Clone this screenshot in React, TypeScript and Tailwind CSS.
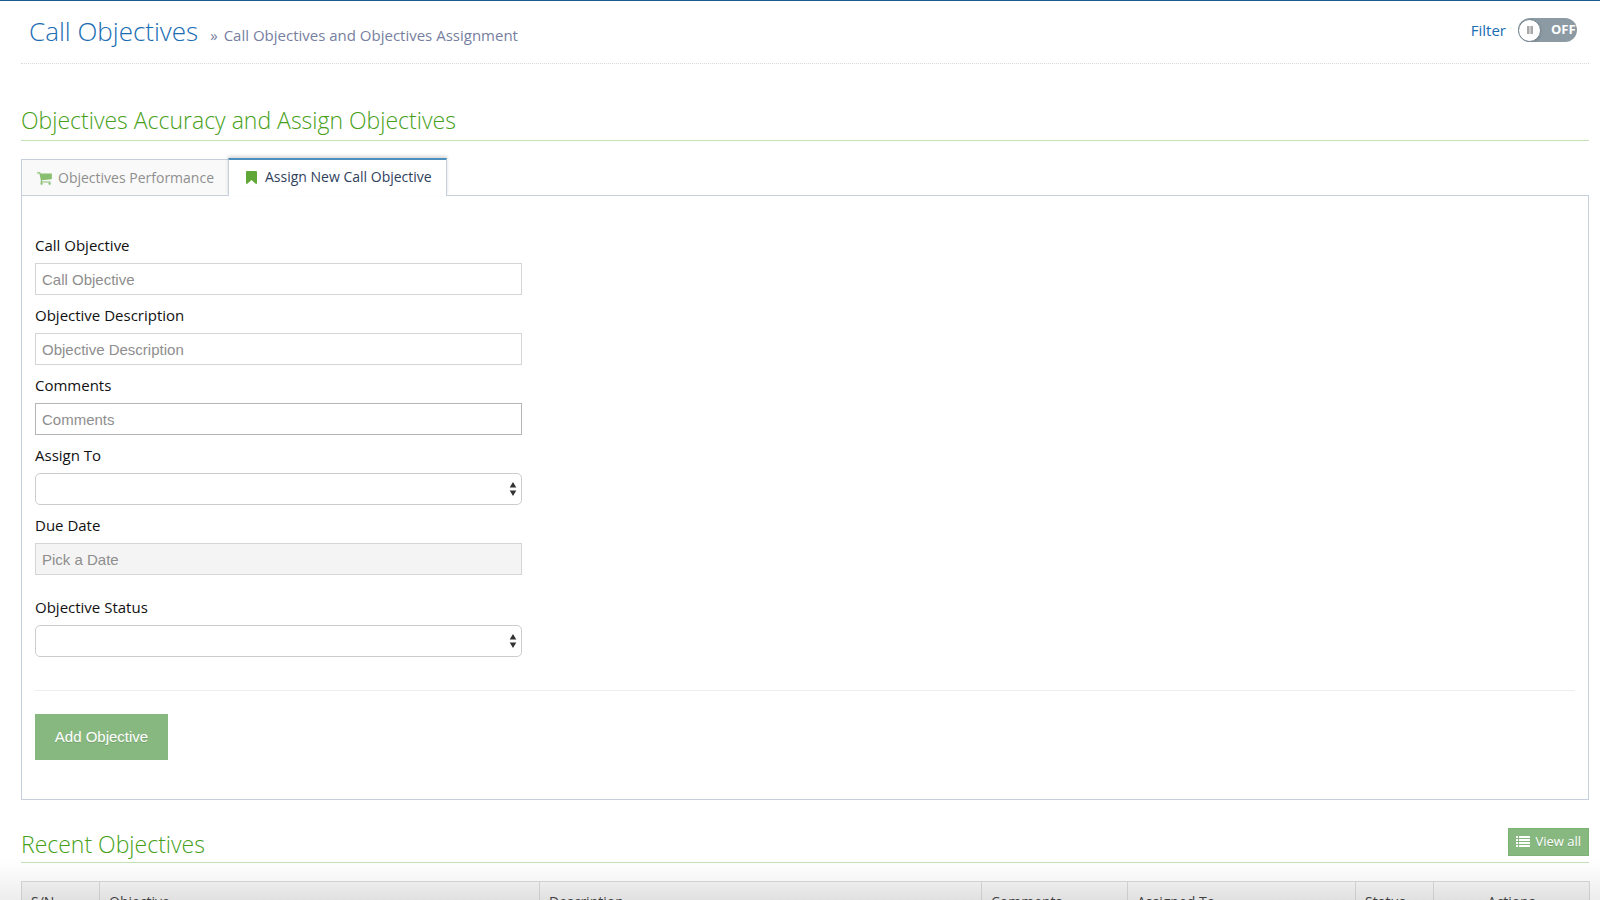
import { useState } from "react";
import type { ReactNode } from "react";

const columns = [
  { label: "S/N", className: "w-[78px] text-left" },
  { label: "Objective", className: "w-[440px] text-left" },
  { label: "Description", className: "w-[442px] text-left" },
  { label: "Comments", className: "w-[146px] text-left" },
  { label: "Assigned To", className: "w-[228px] text-left" },
  { label: "Status", className: "w-[78px] text-left" },
  { label: "Actions", className: "w-[156px] text-center" },
];

const inputClass =
  "block h-8 w-full border px-1.5 font-['Liberation_Sans',Arial,sans-serif] text-[15px] text-[#858585] placeholder:text-[#8e8e8e] outline-none";

function CartIcon() {
  return (
    <svg viewBox="0 0 1792 1792" className="size-4" fill="currentColor" aria-hidden="true">
      <path d="M640 1536q0 52-38 90t-90 38-90-38-38-90 38-90 90-38 90 38 38 90zm896 0q0 52-38 90t-90 38-90-38-38-90 38-90 90-38 90 38 38 90zm128-1088v512q0 24-16.5 42.5t-40.5 21.5l-1044 122q13 60 13 70 0 16-24 64h920q26 0 45 19t19 45-19 45-45 19h-1024q-26 0-45-19t-19-45q0-11 8-31.5t16-36 21.5-40 15.5-29.5l-177-823h-204q-26 0-45-19t-19-45 19-45 45-19h256q16 0 28.5 6.5t19.5 15.5 13 24.5 8 26 5.5 29.5 4.5 26h1201q26 0 45 19t19 45z" />
    </svg>
  );
}

function BookmarkIcon() {
  return (
    <svg viewBox="0 0 11 13" className="h-[13px] w-[11px]" fill="currentColor" aria-hidden="true">
      <path d="M1 0h9q1 0 1 1v11q0 1-1 1L5.500 9 1 13q-1 0-1-1V1q0-1 1-1z" />
    </svg>
  );
}

function ListIcon() {
  return (
    <svg viewBox="0 0 14 12" className="h-3 w-3.5" fill="currentColor" aria-hidden="true">
      <path d="M0 0h2v2H0zM3 0h11v2H3zM0 3h2v2H0zM3 3h11v2H3zM0 6h2v2H0zM3 6h11v2H3zM0 9h2v2H0zM3 9h11v2H3z" />
    </svg>
  );
}

function Field({ id, label, children }: { id: string; label: string; children: ReactNode }) {
  return (
    <div>
      <label htmlFor={id} className="mb-2 block text-[15px] leading-5 text-[#111]">
        {label}
      </label>
      {children}
    </div>
  );
}

function SelectBox({ id }: { id: string }) {
  return (
    <div className="relative">
      <select id={id} className="block h-8 w-full appearance-none rounded-[5px] border border-[#ccc] bg-white px-2 outline-none">
        <option value=""></option>
      </select>
      <svg
        viewBox="0 0 8 14"
        className="pointer-events-none absolute top-[9px] right-[5px] h-3.5 w-2"
        fill="#333"
        aria-hidden="true">
        <path d="M4 0l3.300 5.500H.7zM4 14L.7 8.500h6.600z" />
      </svg>
    </div>
  );
}

export default function App() {
  const [filter, setFilter] = useState(false);

  return (
    <div className="relative h-screen overflow-hidden border-t border-[#1f5a8c] bg-white font-['Open_Sans',sans-serif] text-[15px] text-[#393939]">
      <div className="pr-[11px] pl-[21px]">
        {/* Page header */}
        <header className="flex h-[63px] items-start justify-between border-b border-dotted border-[#d9d9d9] pr-3 pl-2">
          <h1 className="flex items-baseline gap-3 pt-3 text-[26px] leading-9 font-light text-[#1a6db3]">
            Call Objectives
            <small className="flex gap-1.5 text-[15px] font-normal text-[#7680a0]">
              <span>»</span>
              Call Objectives and Objectives Assignment
            </small>
          </h1>
          <label className="flex cursor-pointer items-center gap-3 pt-[17px] text-[#1a6db3]">
            Filter
            <input
              type="checkbox"
              role="switch"
              className="sr-only"
              checked={filter}
              onChange={(e) => setFilter(e.target.checked)}
            />
            <span className="flex h-6 w-[59px] items-center gap-2.5 overflow-hidden rounded-full bg-[#8b9aa3]">
              <span className="flex size-[23px] shrink-0 items-center justify-center rounded-full border border-[#71808a] bg-white shadow">
                <i className="h-2 w-1.5 border-x-2 border-[#a9a9a9] bg-[#ccc]" />
              </span>
              <span className="pb-0.5 text-[13px] leading-5 font-bold text-white">{filter ? "ON" : "OFF"}</span>
            </span>
          </label>
        </header>

        <h2 className="mt-9 border-b border-[#c3e2b8] pt-1 pb-1 text-[23px] leading-8 font-light text-[#479f19]">
          Objectives Accuracy and Assign Objectives
        </h2>

        {/* Tabs */}
        <div role="tablist" className="mt-[17px] flex h-[38px] items-end text-sm">
          <button
            role="tab"
            aria-selected="false"
            className="flex h-[37px] items-center gap-[5px] border border-r-0 border-[#c5d0dc] bg-[#f9f9f9] pr-3.5 pl-[15px] text-[#8f8f8f]">
            <span className="text-[#89bf70]">
              <CartIcon />
            </span>
            Objectives Performance
          </button>
          <button
            role="tab"
            aria-selected="true"
            className="z-10 flex h-[38px] items-center gap-2 border-x border-t-2 border-x-[#c5d0dc] border-t-[#4c8fbd] bg-white pr-3.5 pb-0.5 pl-[17px] text-[#2f3f5c] shadow-[0_-2px_3px_0_rgba(0,0,0,0.15)]">
            <span className="text-[#5fa838]">
              <BookmarkIcon />
            </span>
            Assign New Call Objective
          </button>
        </div>

        <section className="-mt-px border border-[#c5d0dc] px-[13px] pt-[39px] pb-[39px]">
          <form onSubmit={(e) => e.preventDefault()}>
            <div className="flex w-[487px] flex-col gap-2.5">
              <Field id="call-objective" label="Call Objective">
                <input id="call-objective" type="text" placeholder="Call Objective" className={`${inputClass} border-[#d5d5d5] bg-white`} />
              </Field>
              <Field id="description" label="Objective Description">
                <input id="description" type="text" placeholder="Objective Description" className={`${inputClass} border-[#d5d5d5] bg-white`} />
              </Field>
              <Field id="comments" label="Comments">
                <input id="comments" type="text" placeholder="Comments" className={`${inputClass} border-[#b5b5b5] bg-white`} />
              </Field>
              <Field id="assign-to" label="Assign To">
                <SelectBox id="assign-to" />
              </Field>
              <Field id="due-date" label="Due Date">
                <input id="due-date" type="text" readOnly placeholder="Pick a Date" className={`${inputClass} border-[#d5d5d5] bg-[#f4f4f4]`} />
              </Field>
              <div className="pt-3">
                <Field id="status" label="Objective Status">
                  <SelectBox id="status" />
                </Field>
              </div>
            </div>
            <hr className="mt-[33px] mb-[23px] border-[#eee]" />
            <button
              type="submit"
              className="h-[46px] w-[133px] bg-[#87b87f] font-['Liberation_Sans',Arial,sans-serif] text-[15px] text-white text-shadow-2xs">
              Add Objective
            </button>
          </form>
        </section>

        {/* Recent objectives */}
        <div className="mt-7 flex h-[35px] items-start justify-between border-b border-[#c3e2b8]">
          <h2 className="text-[23px] leading-8 font-light text-[#479f19]">Recent Objectives</h2>
          <button className="flex h-7 items-center gap-[5px] border border-[#7db275] bg-[#87b87f] px-[7px] text-[13px] text-white text-shadow-2xs">
            <ListIcon />
            View all
          </button>
        </div>
        <table className="mt-[18px] w-full table-fixed border-collapse">
          <thead>
            <tr className="bg-linear-to-b from-[#f6f6f6] to-[#ececec]">
              {columns.map((col) => (
                <th key={col.label} className={`border border-[#d9d9d9] px-[9px] py-2.5 text-sm font-normal text-[#444] ${col.className}`}>
                  {col.label}
                </th>
              ))}
            </tr>
          </thead>
        </table>
      </div>
      <div className="pointer-events-none absolute inset-x-0 bottom-0 h-10 bg-linear-to-b from-transparent to-black/7" />
    </div>
  );
}
